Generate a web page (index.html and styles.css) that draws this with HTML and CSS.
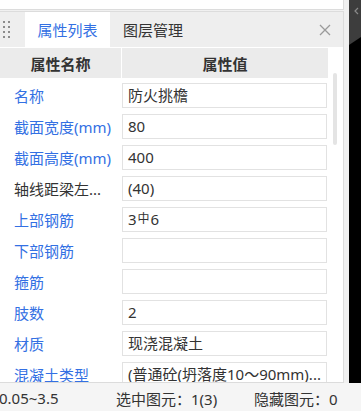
FILE: index.html
```html
<!DOCTYPE html>
<html>
	<head>
		<title>属性列表</title>
		<meta charset="utf-8"/>
		<link rel="stylesheet" href="styles.css">
	</head>
	<body>
		<div class="main">
			<div class="leftCol">
				<div class="topStub"></div>
				<div class="propPanel">
					<div class="tabBar">
						<div class="grip">
							<i></i><i></i><i></i><i></i><i></i><i></i><i></i><i></i>
						</div>
						<div class="tab active">属性列表</div>
						<div class="tab">图层管理</div>
						<div class="closeBtn">
							<svg width="14" height="14" viewBox="0 0 14 14"><path d="M2 2 L12 12 M12 2 L2 12" stroke="#9a9a9a" stroke-width="1.3" fill="none"/></svg>
						</div>
					</div>
					<div class="propBody">
						<div class="hdr">
							<div class="hdrCell nameCol">属性名称</div>
							<div class="hdrCell valCol">属性值</div>
						</div>
						<div class="rows">
							<div class="row"><div class="lbl">名称</div><div class="val">防火挑檐</div></div>
							<div class="row"><div class="lbl">截面宽度(mm)</div><div class="val">80</div></div>
							<div class="row"><div class="lbl">截面高度(mm)</div><div class="val">400</div></div>
							<div class="row"><div class="lbl plain">轴线距梁左...</div><div class="val">(40)</div></div>
							<div class="row"><div class="lbl">上部钢筋</div><div class="val">3<span class="bar">中</span>6</div></div>
							<div class="row"><div class="lbl">下部钢筋</div><div class="val"></div></div>
							<div class="row"><div class="lbl">箍筋</div><div class="val"></div></div>
							<div class="row"><div class="lbl">肢数</div><div class="val">2</div></div>
							<div class="row"><div class="lbl">材质</div><div class="val">现浇混凝土</div></div>
							<div class="row"><div class="lbl">混凝土类型</div><div class="val">(普通砼(坍落度10～90mm)...</div></div>
						</div>
						<div class="scrollThumb"></div>
					</div>
				</div>
			</div>
			<div class="sideGap"></div>
			<div class="darkStrip">
				<svg width="12" height="50" viewBox="0 0 12 50">
					<polygon points="0,0 12,0 12,37 0,45" fill="#3d3d3d"/>
					<path d="M9 8 L6 11 L9 14" stroke="#8a8a8a" stroke-width="1.2" fill="none"/>
				</svg>
			</div>
		</div>
		<div class="statusBar">
			<span class="stat scale">0.05~3.5</span>
			<span class="stat sel">选中图元：1(3)</span>
			<span class="stat">隐藏图元：0</span>
		</div>
	</body>
</html>
```
FILE: styles.css
```css
html { width:100%; height:100% }
body {
	margin:0;
	width:361px;
	height:411px;
	overflow:hidden;
	background:#f0f0f0;
	color:#333;
	font-family:"Noto Sans", "Noto Sans CJK SC", sans-serif;
	font-size:15px;
	display:flex;
	flex-direction:column;
}

.main {
	height:383px;
	flex-shrink:0;
	display:flex;
}
.leftCol {
	width:344px;
	display:flex;
	flex-direction:column;
}
.topStub {
	height:9px;
	flex-shrink:0;
	background:#fff;
	border-bottom:1px solid #dcdcdc;
	border-right:1px solid #dcdcdc;
	margin-bottom:1px;
}
.propPanel {
	flex:1;
	min-height:0;
	display:flex;
	flex-direction:column;
	background:#fff;
	border-top:1px solid #dcdcdc;
	border-right:1px solid #dcdcdc;
	border-bottom:1px solid #dcdcdc;
	overflow:hidden;
}
.sideGap { width:5px; }
.darkStrip {
	width:12px;
	background:#000;
	line-height:0;
}

/* tab bar */
.tabBar {
	height:35px;
	flex-shrink:0;
	display:flex;
	background:#eeeeee;
}
.grip {
	width:25px;
	display:grid;
	grid-template-columns:2px 2px;
	grid-auto-rows:2px;
	column-gap:3px;
	row-gap:3px;
	align-content:center;
	padding-left:3px;
	box-sizing:border-box;
}
.grip i {
	background:#8c8c8c;
	display:block;
}
.tab {
	width:86px;
	display:flex;
	align-items:center;
	justify-content:center;
	line-height:20px;
}
.tab.active {
	width:85px;
	background:#fff;
	color:#3370e3;
}
.closeBtn {
	margin-left:auto;
	width:36px;
	display:flex;
	align-items:center;
	justify-content:center;
}

/* property grid */
.propBody {
	flex:1;
	min-height:0;
	overflow:hidden;
	position:relative;
	padding-top:1px;
}
.hdr {
	height:30px;
	display:flex;
	column-gap:1px;
}
.hdrCell {
	background:#ebebeb;
	display:flex;
	align-items:center;
	justify-content:center;
	font-weight:600;
	color:#333;
}
.nameCol { width:121px; }
.valCol { width:206px; }
.rows { margin-top:2px; }
.row {
	height:31px;
	display:flex;
	align-items:center;
}
.lbl {
	width:122px;
	padding-left:14px;
	box-sizing:border-box;
	color:#3370e3;
	white-space:nowrap;
	overflow:hidden;
}
.lbl.plain { color:#333; }
.val {
	width:205px;
	height:25px;
	box-sizing:border-box;
	border:1px solid #e2e2e2;
	padding-left:5px;
	line-height:23px;
	white-space:nowrap;
	overflow:hidden;
}
.bar {
	font-size:12px;
	position:relative;
	top:-2px;
	margin:0 1px;
}
.scrollThumb {
	position:absolute;
	left:333px;
	top:26px;
	width:4px;
	height:72px;
	border-radius:2px;
	background:#e4e4e4;
}

/* status */
.statusBar {
	height:28px;
	flex-shrink:0;
	background:#f5f5f5;
	display:flex;
	align-items:center;
	padding-top:2px;
	box-sizing:border-box;
}
.stat { white-space:nowrap; }
.scale { width:117px; margin-left:-1px; }
.sel { width:138px; }
```
